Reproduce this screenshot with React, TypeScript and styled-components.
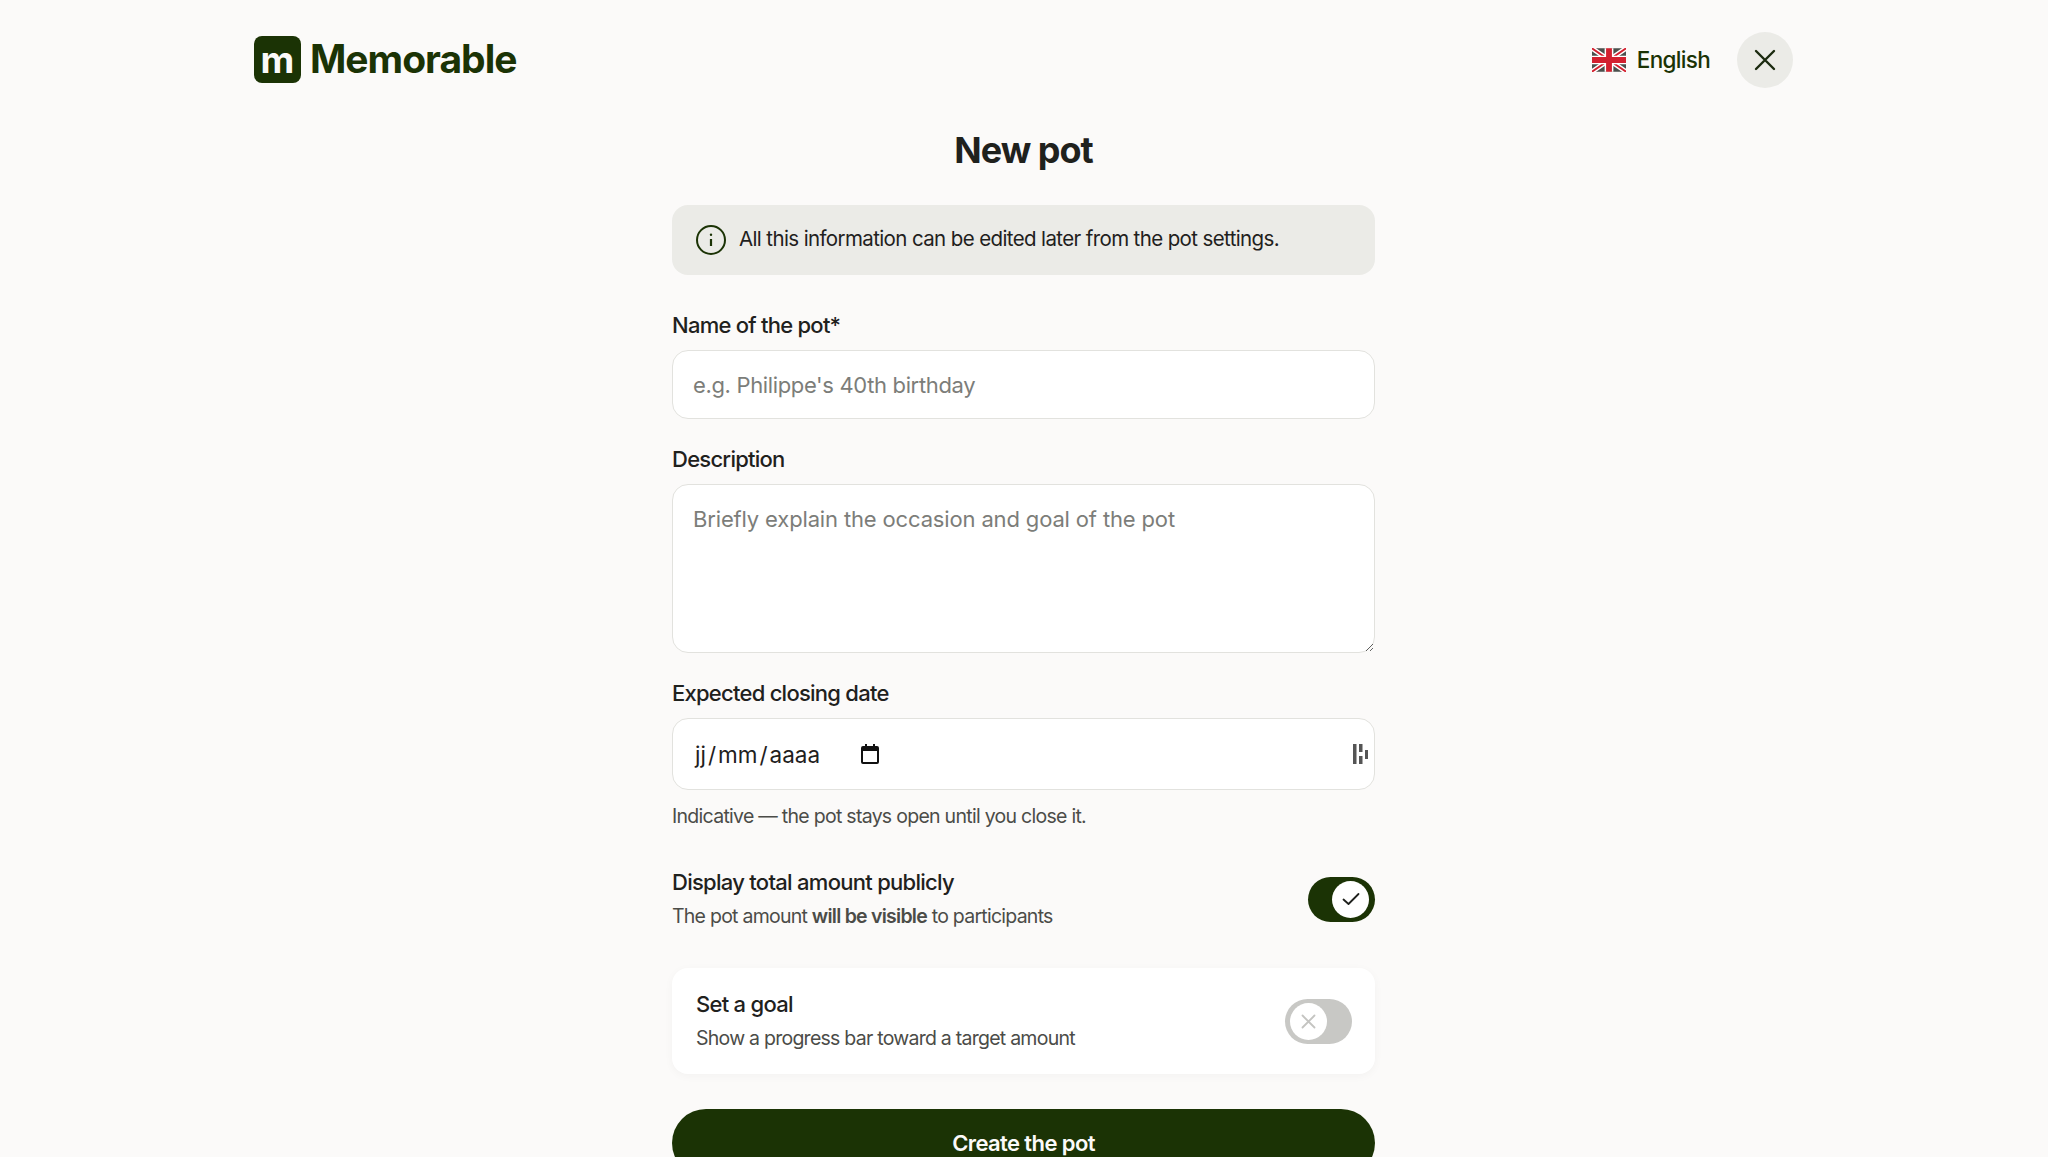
import React from 'react';
import styled, { createGlobalStyle } from 'styled-components';

const GlobalStyle = createGlobalStyle`
  html, body {
    margin: 0;
    height: 1157px;
    overflow: hidden;
    background: #fbfaf9;
    font-family: Inter, "Liberation Sans", sans-serif;
    color: #1f211d;
  }
  * { box-sizing: border-box; }
`;

const Page = styled.div`
  width: 2048px;
  padding: 0 255px 0 254px;
`;

const Header = styled.header`
  height: 119px;
  display: flex;
  align-items: center;
  justify-content: space-between;
`;

const Brand = styled.div`
  display: flex;
  align-items: center;
  gap: 9px;
  color: #1b3305;
  font-size: 39px;
  font-weight: 700;
  letter-spacing: -1px;
  line-height: 47px;
`;

const BrandName = styled.span`
  margin-top: -2px;
`;

const LogoMark = styled.div`
  width: 47px;
  height: 47px;
  border-radius: 8px;
  background: #1b3305;
  color: #fbfaf9;
  font-size: 37px;
  font-weight: 700;
  line-height: 40px;
  letter-spacing: 0;
  display: flex;
  align-items: center;
  justify-content: center;
`;

const HeaderRight = styled.div`
  display: flex;
  align-items: center;
  gap: 27px;
`;

const Language = styled.div`
  display: flex;
  align-items: center;
  gap: 11px;
  color: #1b3305;
  font-size: 22.5px;
  font-weight: 500;
  letter-spacing: -0.7px;
`;

const CloseButton = styled.button`
  width: 56px;
  height: 56px;
  border: 0;
  padding: 0;
  border-radius: 50%;
  background: #ebebe7;
  color: #1b2a10;
  display: flex;
  align-items: center;
  justify-content: center;
`;

const Column = styled.main`
  width: 703px;
  margin: 0 auto;
`;

const Title = styled.h1`
  margin: 0 0 24px;
  text-align: center;
  font-size: 36px;
  line-height: 62px;
  font-weight: 700;
  letter-spacing: -1px;
`;

const Notice = styled.div`
  height: 70px;
  border-radius: 16px;
  background: #ebebe7;
  padding: 0 23px;
  display: flex;
  align-items: center;
  gap: 12px;
  font-size: 20.5px;
  letter-spacing: -0.62px;
  margin-bottom: 35px;
  span { position: relative; top: -2px; }
`;

const Label = styled.label`
  display: block;
  font-size: 22px;
  line-height: 30px;
  font-weight: 500;
  letter-spacing: -0.75px;
  margin-bottom: 10px;
`;

const TextInput = styled.input`
  display: block;
  width: 100%;
  height: 69px;
  border: 1.5px solid #e2e2de;
  border-radius: 16px;
  background: #fff;
  padding: 0 20px;
  font: 400 22px Inter, "Liberation Sans", sans-serif;
  letter-spacing: -0.35px;
  margin-bottom: 25px;
  &::placeholder { color: #7c7d79; opacity: 1; }
`;

const TextArea = styled.textarea`
  display: block;
  width: 100%;
  height: 169px;
  border: 1.5px solid #e2e2de;
  border-radius: 16px;
  background: #fff;
  padding: 20px 20px;
  resize: vertical;
  font: 400 22px/28px Inter, "Liberation Sans", sans-serif;
  letter-spacing: -0.15px;
  margin-bottom: 25px;
  &::placeholder { color: #7c7d79; opacity: 1; }
`;

const DateField = styled.div`
  height: 72px;
  border: 1.5px solid #e2e2de;
  border-radius: 16px;
  background: #fff;
  padding: 0 5px 0 22px;
  display: flex;
  align-items: center;
  font-size: 22.5px;
  letter-spacing: 0;
  color: #1f211d;
`;

const DateText = styled.span`
  width: 165px;
`;

const DateSeparator = styled.span`
  margin: 0 2px;
`;

const CalendarSlot = styled.span`
  display: flex;
  flex: 1;
`;

const Help = styled.p`
  margin: 13px 0 38px;
  font-size: 19.5px;
  line-height: 26px;
  color: #4b4c48;
  letter-spacing: -0.72px;
`;

const OptionRow = styled.div`
  display: flex;
  align-items: center;
  justify-content: space-between;
  margin-bottom: 37px;
`;

const OptionCard = styled.div`
  height: 106px;
  padding: 0 23px 0 24px;
  background: #fff;
  border-radius: 16px;
  box-shadow: 0 2px 10px rgba(30, 30, 20, 0.035);
  display: flex;
  align-items: center;
  justify-content: space-between;
  margin-bottom: 35px;
`;

const OptionTitle = styled.div`
  font-size: 22px;
  line-height: 30px;
  font-weight: 500;
  letter-spacing: -0.72px;
  margin-bottom: 4px;
`;

const OptionText = styled.div`
  font-size: 19.5px;
  line-height: 30px;
  color: #4b4c48;
  letter-spacing: -0.75px;
  b { font-weight: 600; }
`;

const Toggle = styled.div<{ $on?: boolean }>`
  width: 67px;
  height: 45px;
  border-radius: 23px;
  background: ${(p) => (p.$on ? '#1b3305' : '#c8c8c5')};
  padding: 4px ${(p) => (p.$on ? '6px' : '5px')};
  display: flex;
  justify-content: ${(p) => (p.$on ? 'flex-end' : 'flex-start')};
`;

const Knob = styled.div<{ $on?: boolean }>`
  width: 37px;
  height: 37px;
  border-radius: 50%;
  background: #fff;
  color: ${(p) => (p.$on ? '#1f211d' : '#c4c4c1')};
  display: flex;
  align-items: center;
  justify-content: center;
`;

const SubmitButton = styled.button`
  display: block;
  width: 100%;
  height: 68px;
  border: 0;
  border-radius: 34px;
  background: #1b3305;
  color: #fbfaf9;
  font: 600 22px Inter, "Liberation Sans", sans-serif;
  letter-spacing: -0.6px;
`;

const UkFlag = () => (
  <svg width="34" height="24" viewBox="0 0 35 24">
    <rect width="35" height="24" rx="2" fill="#4a4f4c" />
    <path d="M0 0 35 24M35 0 0 24" stroke="#fff" strokeWidth="5" />
    <path d="M0 0 35 24M35 0 0 24" stroke="#d3202f" strokeWidth="2" />
    <path d="M17.5 0V24M0 12H35" stroke="#fff" strokeWidth="9" />
    <path d="M17.5 0V24M0 12H35" stroke="#d3202f" strokeWidth="6" />
  </svg>
);

const CloseIcon = () => (
  <svg width="22" height="22" viewBox="0 0 22 22" fill="none" stroke="currentColor" strokeWidth="2.4" strokeLinecap="round">
    <path d="M2 2 20 20M20 2 2 20" />
  </svg>
);

const InfoIcon = () => (
  <svg width="32" height="32" viewBox="0 0 32 32" fill="none" stroke="#1b3305" strokeWidth="2">
    <circle cx="16" cy="16" r="14" />
    <path d="M16 15v7" strokeWidth="2.2" />
    <circle cx="16" cy="10.8" r="1.2" fill="#1b3305" stroke="none" />
  </svg>
);

const CalendarIcon = () => (
  <svg width="20" height="20" viewBox="0 0 20 20">
    <path
      d="M5 0h2v2h6V0h2v2h2a2 2 0 0 1 2 2v14a2 2 0 0 1-2 2H3a2 2 0 0 1-2-2V4a2 2 0 0 1 2-2h2zM3 7v11h14V7z"
      fill="#111"
      fillRule="evenodd"
    />
  </svg>
);

const StepperGlyph = () => (
  <svg width="16" height="20" viewBox="0 0 16 20" fill="#555">
    <rect x="0" y="0" width="3.5" height="20" />
    <rect x="6" y="0" width="3.5" height="8" />
    <rect x="6" y="12" width="3.5" height="8" />
    <rect x="12" y="6" width="3" height="9" />
  </svg>
);

const CheckIcon = () => (
  <svg width="18" height="14" viewBox="0 0 18 14" fill="none" stroke="currentColor" strokeWidth="1.8" strokeLinecap="round" strokeLinejoin="round">
    <path d="M1.5 7.5 6.5 12 16.5 2" />
  </svg>
);

const CrossIcon = () => (
  <svg width="15" height="15" viewBox="0 0 15 15" fill="none" stroke="currentColor" strokeWidth="1.8" strokeLinecap="round">
    <path d="M1.5 1.5 13.5 13.5M13.5 1.5 1.5 13.5" />
  </svg>
);

const App: React.FC = () => (
  <Page>
    <GlobalStyle />
    <Header>
      <Brand>
        <LogoMark>m</LogoMark>
        <BrandName>Memorable</BrandName>
      </Brand>
      <HeaderRight>
        <Language>
          <UkFlag />
          English
        </Language>
        <CloseButton aria-label="Close">
          <CloseIcon />
        </CloseButton>
      </HeaderRight>
    </Header>
    <Column>
      <Title>New pot</Title>
      <Notice>
        <InfoIcon />
        <span>All this information can be edited later from the pot settings.</span>
      </Notice>
      <Label>Name of the pot*</Label>
      <TextInput placeholder="e.g. Philippe's 40th birthday" />
      <Label>Description</Label>
      <TextArea placeholder="Briefly explain the occasion and goal of the pot" />
      <Label>Expected closing date</Label>
      <DateField>
        <DateText>
          jj<DateSeparator>/</DateSeparator>mm<DateSeparator>/</DateSeparator>aaaa
        </DateText>
        <CalendarSlot>
          <CalendarIcon />
        </CalendarSlot>
        <StepperGlyph />
      </DateField>
      <Help>Indicative — the pot stays open until you close it.</Help>
      <OptionRow>
        <div>
          <OptionTitle>Display total amount publicly</OptionTitle>
          <OptionText>
            The pot amount <b>will be visible</b> to participants
          </OptionText>
        </div>
        <Toggle $on>
          <Knob $on>
            <CheckIcon />
          </Knob>
        </Toggle>
      </OptionRow>
      <OptionCard>
        <div>
          <OptionTitle>Set a goal</OptionTitle>
          <OptionText>Show a progress bar toward a target amount</OptionText>
        </div>
        <Toggle>
          <Knob>
            <CrossIcon />
          </Knob>
        </Toggle>
      </OptionCard>
      <SubmitButton>Create the pot</SubmitButton>
    </Column>
  </Page>
);

export default App;
